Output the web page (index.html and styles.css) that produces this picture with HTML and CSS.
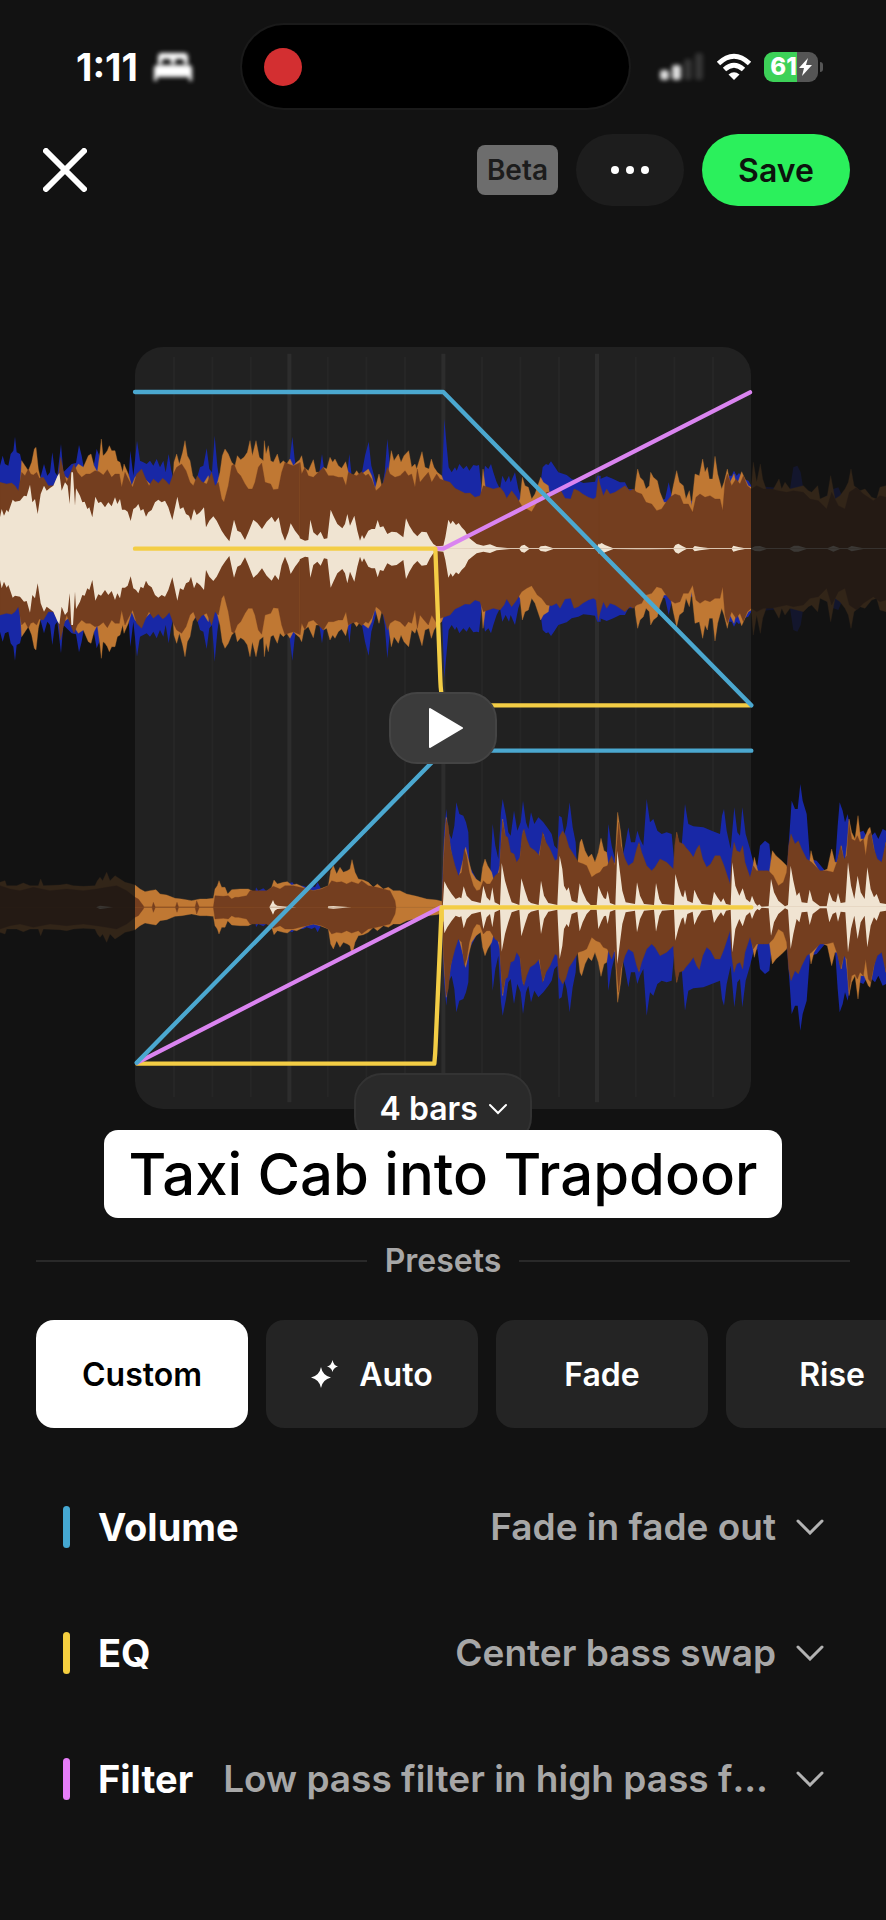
FILE: index.html
```html
<!DOCTYPE html>
<html lang="en">
<head>
    <meta charset="UTF-8">
    <meta name="viewport" content="width=device-width, initial-scale=1">
    <title>Edit transition</title>
    <link rel="stylesheet" href="styles.css">
</head>
<body>
<!-- Status bar -->
<div class="status-bar">
    <span class="status-time">1:11</span>
    <svg class="status-bed" width="42" height="32" viewBox="0 0 42 32">
        <path d="M6 13V6q0-4 4-4h22q4 0 4 4v7h-4V10q0-2-2-2h-5q-2 0-2 2v3h-4v-3q0-2-2-2h-5q-2 0-2 2v3zM2 30V18q0-4 4-4h30q4 0 4 4v12h-3v-4H5v4z"/>
    </svg>
    <div class="island"><span class="record-dot"></span></div>
    <svg class="status-signal" width="46" height="32" viewBox="0 0 46 32">
        <rect x="1" y="19" width="9" height="10" rx="3" opacity=".85"/>
        <rect x="13" y="14" width="9" height="15" rx="3" opacity=".85"/>
        <rect x="25" y="8" width="8" height="21" rx="3" opacity=".15"/>
        <rect x="36" y="2" width="8" height="27" rx="3" opacity=".15"/>
    </svg>
    <svg class="status-wifi" width="36" height="28" viewBox="0 0 36 28">
        <path d="M2.500 10.500Q18-4 33.500 10.500M8.500 16.500Q18 8 27.500 16.500" fill="none" stroke="#fff" stroke-width="5"/>
        <path d="M18 27l-5.500-5.500q5.500-4.500 11 0z" fill="#fff"/>
    </svg>
    <div class="battery">
        <span>61</span>
        <svg width="13" height="18" viewBox="0 0 13 18"><path d="M9 0L0 10h5l-2 8 10-11H7z" fill="#fff"/></svg>
    </div>
</div>

<!-- Header -->
<header class="header">
    <button type="button" class="close-button" aria-label="Close">
        <svg width="44" height="44" viewBox="0 0 44 44"><path d="M3 3l38 38M41 3L3 41"/></svg>
    </button>
    <span class="badge">Beta</span>
    <button type="button" class="more-button" aria-label="More options">
        <svg width="38" height="8" viewBox="0 0 38 8"><circle cx="4" cy="4" r="4"/><circle cx="19" cy="4" r="4"/><circle cx="34" cy="4" r="4"/></svg>
    </button>
    <button type="button" class="save-button">Save</button>
</header>

<main>
    <!-- Transition editor -->
    <section class="stage">
        <svg class="stage-canvas" viewBox="0 0 2658 2286">
            <rect x="405" y="0" width="1848" height="2286" rx="84" class="window"/>
            <path class="beat" d="M522 30V2250M637 30V2250M752 30V2250M983 30V2250M1099 30V2250M1215 30V2250M1446 30V2250M1561 30V2250M1677 30V2250M1907 30V2250M2023 30V2250M2139 30V2250"/>
            <path class="bar" d="M868 20V2266M1330 20V2266M1791 20V2266"/>

            <!-- Outgoing track, upper half mirrored below its axis -->
            <g transform="translate(0 -24)">
                <g id="track-a">
                    <path class="w-blue" d="M0 629V380L8 350 15 375 25 380 32 345 40 335 45 293 50 340 60 345 68 380 80 430 120 420 132 375 142 410 150 400 157 340 165 400 172 410 183 315 190 400 215 375 228 372 237 318 245 350 252 390 275 430 282 375 290 330 298 350 310 500 385 430 391 335 400 410 411 305 420 365 430 370 440 375 450 365 460 380 470 360 480 385 490 365 497 400 506 345 513 390 520 420 590 420 600 385 610 380 620 328 628 390 636 400 644 290 652 380 662 450 860 420 868 370 877 293 884 360 895 420 902 629Z"/>
                    <path class="w-orange" d="M50 629L55 530 65 365 75 380 85 395 95 370 103 330 108 325 115 390 122 420 140 500 178 500 184 375 192 410 205 420 225 390 235 375 250 385 265 350 273 345 282 380 292 400 300 340 304 300 309 350 315 345 322 335 328 320 335 335 345 335 352 365 360 370 368 400 372 375 385 405 395 440 405 415 420 400 435 420 515 500 522 370 530 345 538 375 548 340 555 305 562 350 570 365 578 410 590 430 600 450 625 410 635 500 660 400 667 350 675 330 685 345 695 370 705 380 712 350 722 362 732 355 742 340 750 305 757 350 768 305 778 355 790 365 793 305 798 345 805 320 812 365 820 370 832 345 840 375 850 365 860 375 870 360 880 380 890 370 902 360V629Z"/>
                    <path class="w-brown" d="M0 629V430L20 435 35 432 45 440 55 455 65 400 75 410 85 390 92 405 100 408 110 400 118 418 130 415 145 440 160 440 175 410 182 355 190 395 200 430 210 405 222 375 232 400 245 415 258 405 270 405 285 395 297 398 310 408 322 392 335 415 345 405 358 405 365 445 375 400 385 420 398 445 410 405 425 390 435 415 447 440 460 420 475 433 488 418 497 425 508 438 520 405 530 385 545 375 558 395 570 430 580 440 592 410 605 428 620 435 635 400 645 440 655 430 665 480 672 490 685 440 695 380 702 375 712 400 722 410 735 435 745 450 757 450 765 430 775 385 785 372 795 430 812 435 820 452 835 450 845 400 855 370 865 375 880 380 902 370V629Z"/>
                    <path class="w-cream" d="M0 632V535L5 510 12 530 20 512 25 520 38 482 45 488 60 485 72 470 80 472 90 437 97 490 105 480 113 525 122 465 132 440 140 455 150 447 160 440 172 412 178 402 185 455 195 430 203 440 209 495 214 400 219 400 225 500 228 448 240 470 247 490 254 488 262 510 268 505 277 535 286 473 295 492 303 488 315 505 325 490 335 502 345 475 352 495 360 480 366 512 375 512 383 518 392 546 400 510 408 505 415 495 422 515 430 510 438 533 445 520 455 513 465 490 475 482 485 490 495 485 505 505 517 543 532 473 540 510 550 505 558 525 567 530 573 545 582 510 590 528 600 520 612 505 618 565 628 545 640 532 650 545 665 575 675 590 688 607 702 542 712 575 722 580 735 603 745 580 760 542 772 552 786 570 800 548 815 533 825 550 836 535 845 580 855 605 865 580 872 553 885 575 902 597V632Z"/>
                    <g transform="translate(900 0)">
                        <path class="w-blue" d="M0 629L55 420 66 345 75 410 140 420 148 345 155 410 185 405 195 350 206 308 214 380 225 420 240 480 254 400 262 300 270 380 280 450 425 450 433 240 440 320 446 385 455 400 465 385 470 395 478 375 490 390 500 380 508 395 520 378 530 380 537 378 545 450 555 380 565 390 573 375 580 400 590 430 600 450 607 410 617 430 627 410 632 430 645 400 655 450 665 480 715 480 728 385 738 375 745 378 753 367 762 380 775 400 800 408 815 420 835 425 850 432 870 430 885 428 892 410 902 410V629Z"/>
                        <path class="w-orange" d="M0 629V360L5 350 12 385 25 395 40 362 48 400 60 400 70 385 80 390 90 355 98 370 105 360 115 380 125 388 137 368 145 400 160 410 170 395 180 410 192 400 205 390 215 410 225 450 237 405 245 440 262 420 274 335 282 365 295 345 303 370 312 350 326 335 335 385 345 375 350 390 366 338 375 385 387 390 394 360 402 385 412 400 425 410 432 430 445 520 540 520 549 390 558 460 640 520 660 480 667 415 675 440 685 445 695 480 705 465 722 415 730 430 745 440 760 530 902 530V629Z"/>
                        <path class="w-brown" d="M0 629V370L5 405 15 385 25 410 40 415 55 400 70 385 85 410 100 410 115 415 128 415 138 440 145 400 155 405 170 410 185 398 197 410 205 405 215 420 228 455 240 445 250 430 262 385 270 405 285 415 300 410 315 395 325 410 335 405 345 445 352 390 360 430 372 415 385 400 395 430 410 405 420 420 435 425 450 430 465 448 480 455 495 463 510 462 525 475 540 470 550 440 565 445 580 450 600 445 612 460 620 478 635 455 650 475 665 500 680 510 695 518 712 490 725 480 740 460 755 458 770 465 780 450 795 478 812 480 822 450 835 455 848 465 865 475 880 480 888 475 895 412 902 450V629Z"/>
                        <path class="w-cream" d="M-4 632V596L15 605 25 603 31 542 40 580 52 590 62 578 72 600 82 598 92 512 100 530 112 555 127 568 135 555 142 525 150 560 163 530 172 575 180 605 186 588 192 600 205 575 215 570 225 570 233 543 240 565 250 562 262 585 275 578 290 580 310 595 318 538 328 560 340 580 352 592 365 578 380 580 390 600 400 615 410 622 430 620 436 595 445 542 452 555 458 545 468 558 476 552 485 565 495 575 505 595 515 603 530 615 550 620 570 616 590 624 630 628 658 628 664 620 673 617 688 628 716 628 722 622 737 620 760 628 890 628 895 615 902 612V630Z"/>
                    </g>
                    <g transform="translate(1770 0)">
                        <path class="w-blue" d="M30 629V420L50 412 70 420 90 430 105 430 115 450 128 450 138 500 225 480 236 430 245 470 253 440 262 500 405 450 415 410 425 410 432 395 440 410 447 402 460 420 475 425 484 440 600 450 610 385 622 380 632 400 640 450 660 520 730 450 745 445 760 480 888 520V629Z"/>
                        <path class="w-orange" d="M31 629V480L60 470 100 520 130 490 137 430 143 390 150 415 160 425 168 450 178 440 182 400 190 415 202 425 210 460 222 490 240 490 250 440 260 395 268 430 280 440 288 480 298 455 305 500 315 405 328 410 338 360 345 400 352 385 358 420 368 420 375 352 383 405 395 450 402 430 412 390 420 430 432 405 440 440 455 398 465 420 475 440 484 445 490 370 500 430 511 375 518 420 530 455 545 460 567 420 575 450 585 430 600 450 640 440 655 455 665 460 683 440 690 480 712 470 722 410 735 480 750 470 765 450 775 430 783 390 792 440 810 455 825 450 845 475 860 480 870 445 888 440V629Z"/>
                        <path class="w-brown" d="M28 629V430L40 470 50 450 60 465 75 460 90 450 105 440 120 455 130 450 140 460 155 465 168 490 185 495 200 515 215 510 228 490 240 475 255 465 270 470 280 495 295 495 308 520 318 475 330 465 345 475 360 470 375 480 390 480 398 515 405 430 412 405 425 440 438 420 450 435 460 410 472 440 484 450 500 440 520 450 545 450 565 455 590 460 610 455 640 460 660 480 685 485 710 510 725 460 745 500 765 510 778 460 800 445 820 465 850 485 870 470 888 475V629Z"/>
                        <path class="w-cream" d="M22 630L25 618 35 612 45 618 70 628 140 627 180 627 250 628 256 618 265 614 278 622 290 628 308 628 314 621 330 624 360 628 425 628 430 620 445 624 465 628 484 628 495 622 510 621 530 628 598 628 612 620 625 620 650 628 712 628 730 620 750 628 772 628 785 621 820 628 888 628V630Z"/>
                    </g>
                </g>
                <use href="#track-a" transform="matrix(1 0 0 -1 0 1258)"/>
                <rect class="dim" x="2253" y="300" width="405" height="660"/>
            </g>

            <!-- Incoming track -->
            <g transform="translate(0 1056)">
                <g id="track-b">
                    <path class="w-blue" d="M760 625L768 565 775 575 790 568 798 575 860 555 877 550 885 560 910 560 920 565 935 560 945 565 953 550 962 568 975 625Z"/>
                    <path class="w-orange" d="M0 625V550L15 545 20 560 50 560 70 552 90 560 115 560 122 540 130 560 180 558 200 555 220 560 250 562 285 560 292 545 300 535 308 545 320 520 330 545 345 530 360 540 375 550 395 555 405 558 420 570 435 578 450 575 468 572 480 585 500 588 525 598 545 600 575 605 600 600 620 600 640 598 645 570 652 560 657 545 665 565 675 565 683 585 695 572 720 570 745 570 760 578 800 578 815 565 822 543 832 555 850 550 862 548 875 558 890 555 905 562 920 570 940 575 960 570 985 560 992 515 1000 500 1010 525 1020 505 1030 520 1042 515 1050 510 1056 482 1065 520 1075 540 1090 543 1105 550 1120 565 1132 555 1150 570 1165 565 1180 575 1200 575 1220 585 1250 592 1280 600 1310 603 1330 608V625Z"/>
                    <path class="w-brown" d="M0 625V560L30 570 60 575 100 565 150 575 200 570 250 575 290 570 320 565 350 560 380 575 405 595 415 600 430 620 432 625 456 625 460 610 466 625 526 625 531 610 536 625 585 625 590 605 598 625 640 625 645 590 670 592 685 590 695 600 705 595 715 595 740 590 750 575 775 575 800 575 820 562 840 570 855 560 880 560 900 565 920 570 940 575 965 570 985 560 995 545 1010 550 1025 548 1040 555 1055 548 1075 555 1085 545 1105 560 1130 565 1150 570 1170 575 1185 605 1188 625Z"/>
                    <path class="w-cream" d="M288 625L300 620 340 625ZM808 625L815 612 819 603 824 615 832 620 870 624 890 625ZM983 625L985 622 1000 621 1055 625Z"/>
                    <g transform="translate(1260 0)">
                        <path class="w-blue" d="M66 625V580L72 400 79 330 85 400 95 420 103 380 109 310 118 345 130 350 138 370 145 400 148 500 180 560 210 540 218 375 226 440 235 480 243 340 248 300 258 350 265 400 272 410 282 335 292 395 302 370 309 305 318 370 325 390 333 340 343 375 355 355 370 370 385 390 395 405 403 440 412 450 417 350 425 355 433 405 440 380 449 310 458 385 467 430 472 520 558 520 565 375 575 440 585 480 600 500 615 440 625 385 633 430 645 430 652 395 660 420 670 440 680 300 690 370 700 360 712 395 725 405 740 400 755 405 762 480 785 440 795 315 805 375 820 382 850 385 875 395 900 405 906 350 912 330 920 395 932 450 943 325 952 400 960 410 967 325 977 405 990 450 1000 490 1012 500 1020 440 1035 425 1048 435 1055 500 1100 520 1110 380 1115 305 1125 330 1133 330 1141 255 1148 305 1160 345 1170 480 1190 485 1215 515 1245 500 1253 380 1259 310 1268 335 1275 370 1283 345 1292 400 1305 430 1318 400 1330 395 1345 420 1365 400 1375 420 1388 390 1398 395V625Z"/>
                        <path class="w-orange" d="M66 625L72 450 79 355 90 440 110 560 130 480 137 445 145 480 155 520 168 540 182 550 188 505 195 480 203 500 215 520 225 560 240 500 248 360 258 430 280 560 300 480 310 395 325 480 350 500 370 405 385 470 410 560 428 400 445 480 472 500 480 430 485 420 495 455 505 475 515 465 525 490 535 460 543 418 552 455 560 460 568 520 585 490 593 340 602 400 612 500 620 560 640 520 657 435 675 560 760 560 770 400 785 480 830 560 990 560 1003 475 1012 510 1030 560 1048 520 1057 455 1068 470 1085 485 1100 500 1115 560 1165 520 1173 455 1182 490 1200 520 1222 510 1235 450 1245 490 1252 490 1264 440 1274 500 1282 430 1287 360 1295 400 1305 420 1314 350 1322 420 1332 420 1345 390 1350 385 1360 440 1380 560 1398 430V625Z"/>
                        <path class="w-brown" d="M66 625L70 500 78 360 85 380 92 450 105 500 115 530 125 520 133 450 140 470 148 520 160 560 170 575 180 572 190 545 200 555 210 555 225 530 238 520 242 450 248 365 256 410 263 415 272 460 282 465 290 490 300 475 306 410 312 390 320 420 330 445 345 455 358 470 368 400 378 430 390 450 405 485 412 480 417 415 428 395 437 410 447 445 460 465 475 490 490 495 500 500 515 535 528 525 540 520 550 505 562 500 575 470 585 500 590 440 596 370 603 440 615 480 625 500 640 490 650 450 657 430 665 460 680 500 695 515 705 505 720 480 740 490 760 510 764 440 770 400 778 430 790 435 797 445 810 460 820 475 830 450 838 438 848 480 860 505 872 495 885 470 900 470 912 500 930 555 935 480 942 430 950 455 960 460 968 440 975 490 990 535 1000 500 1010 515 1030 515 1045 515 1060 530 1075 560 1090 550 1100 520 1106 440 1113 405 1125 435 1135 425 1145 450 1160 480 1175 490 1200 515 1220 515 1240 520 1252 485 1262 440 1272 480 1280 470 1287 370 1295 420 1305 425 1312 410 1320 430 1330 420 1337 470 1345 410 1352 400 1362 450 1372 480 1385 490 1398 430V625Z"/>
                        <path class="w-cream" d="M68 627L73 547 82 565 95 585 107 600 118 595 124 598 131 562 140 590 155 605 182 612 190 560 200 595 210 605 217 565 224 610 240 618 245 492 255 545 265 580 275 610 298 618 304 538 315 575 325 605 333 612 356 618 363 545 372 590 385 612 412 618 419 470 427 510 432 560 440 575 446 565 455 605 472 612 479 553 488 580 500 605 512 618 530 618 535 560 545 585 552 598 558 600 563 575 570 612 586 618 592 455 600 520 607 575 617 610 645 615 651 550 660 590 672 615 702 618 708 552 718 600 726 615 762 618 766 525 775 560 785 590 790 595 795 572 802 605 818 612 823 572 833 595 845 615 875 618 882 578 892 595 903 610 910 598 918 615 932 618 937 490 946 560 958 590 968 568 978 600 990 610 996 590 1005 612 1012 620 1018 616 1025 624 1046 622 1053 540 1062 580 1075 605 1095 622 1104 618 1112 500 1120 545 1130 590 1138 580 1145 610 1162 612 1169 572 1178 605 1200 622 1220 622 1228 580 1238 605 1248 610 1254 582 1262 612 1276 610 1284 490 1293 560 1303 600 1313 530 1322 580 1334 600 1342 505 1352 570 1362 595 1370 585 1380 612 1398 615V627Z"/>
                    </g>
                </g>
                <use href="#track-b" transform="matrix(1 0 0 -1 0 1250)"/>
                <rect class="dim" x="0" y="460" width="405" height="330"/>
            </g>

            <!-- Automation curves -->
            <g class="curves">
                <path class="filter" d="M1305 605H1330L2250 136"/>
                <path class="eq" d="M405 605H1306L1321 1000Q1324 1075 1340 1075H2250"/>
                <path class="volume" d="M405 135H1330L2254 1075"/>
                <path class="eq" d="M412 2150H1303Q1306 2120 1307 2090L1325 1681"/>
                <path class="filter" d="M412 2147L1322 1681"/>
                <path class="eq" d="M1325 1720V1681H2254"/>
                <path class="volume" d="M410 2147L1330 1211H2254"/>
            </g>
        </svg>

        <button type="button" class="play-button" aria-label="Play">
            <svg width="34" height="40" viewBox="0 0 34 40"><path d="M1 1L33 20 1 39z"/></svg>
        </button>

        <label class="length-picker">
            <select aria-label="Transition length">
                <option>4 bars</option>
                <option>8 bars</option>
            </select>
            <svg width="18" height="12" viewBox="0 0 18 12"><path d="M1 2l8 8 8-8"/></svg>
        </label>
    </section>

    <p class="caption">Taxi Cab into Trapdoor</p>

    <!-- Presets -->
    <h2 class="presets-title">Presets</h2>
    <div class="presets">
        <button type="button" class="preset active">Custom</button>
        <button type="button" class="preset">
            <svg width="28" height="28" viewBox="0 0 28 28"><path d="M10 7Q11.500 15.500 20 17.500 11.500 19.500 10 28 8.500 19.500 0 17.500 8.500 15.500 10 7zM21.500 0Q22.500 5.500 27 6.500 22.500 7.500 21.500 12 20.500 7.500 16 6.500 20.500 5.500 21.500 0z"/></svg>
            Auto
        </button>
        <button type="button" class="preset">Fade</button>
        <button type="button" class="preset">Rise</button>
    </div>

    <!-- Curve settings -->
    <div class="settings">
        <div class="setting">
            <span class="marker volume"></span>
            <label for="volume">Volume</label>
            <select id="volume">
                <option>Fade in fade out</option>
            </select>
            <svg class="chevron" width="28" height="16" viewBox="0 0 28 16"><path d="M2 2l12 12L26 2"/></svg>
        </div>
        <div class="setting">
            <span class="marker eq"></span>
            <label for="eq">EQ</label>
            <select id="eq">
                <option>Center bass swap</option>
            </select>
            <svg class="chevron" width="28" height="16" viewBox="0 0 28 16"><path d="M2 2l12 12L26 2"/></svg>
        </div>
        <div class="setting">
            <span class="marker filter"></span>
            <label for="filter">Filter</label>
            <select id="filter">
                <option>Low pass filter in high pass filter out</option>
            </select>
            <svg class="chevron" width="28" height="16" viewBox="0 0 28 16"><path d="M2 2l12 12L26 2"/></svg>
        </div>
    </div>
</main>
</body>
</html>
```

FILE: styles.css
```css
* {
    box-sizing: border-box;
}
body {
    margin: 0;
    background-color: #121212;
    color: #ffffff;
    font-family: Inter, "Liberation Sans", sans-serif;
    font-weight: 600;
    overflow-x: hidden;
}
button,
select {
    margin: 0;
    padding: 0;
    border: none;
    background: none;
    color: inherit;
    font: inherit;
    cursor: pointer;
}
select {
    appearance: none;
}
svg {
    display: block;
    flex: none;
}

/* Status bar */
.status-bar {
    display: flex;
    align-items: center;
    padding: 25px 68px 0 76px;
}
.status-time {
    font-size: 38px;
    font-weight: 700;
    line-height: 40px;
}
.status-bed {
    margin-left: 14px;
    fill: #ffffff;
    filter: blur(2px);
}
.island {
    flex: 1;
    display: flex;
    align-items: center;
    height: 83px;
    margin: 0 30px 0 48px;
    padding-left: 22px;
    border-radius: 42px;
    background-color: #000000;
    box-shadow: 0 0 0 2px #1a1a1a;
}
.record-dot {
    width: 38px;
    height: 38px;
    border-radius: 50%;
    background-color: #d32f31;
}
.status-signal {
    fill: #ffffff;
    filter: blur(2px);
}
.status-wifi {
    margin: 0 12px 0 11px;
}
.battery {
    position: relative;
    display: flex;
    align-items: center;
    justify-content: center;
    gap: 2px;
    width: 54px;
    height: 30px;
    border-radius: 9px;
    background: linear-gradient(to right, #3dd158 62%, #555555 62%);
    font-size: 24px;
    font-weight: 800;
    line-height: 30px;
}
.battery::after {
    content: "";
    position: absolute;
    left: 100%;
    margin-left: 2px;
    width: 3px;
    height: 10px;
    border-radius: 0 3px 3px 0;
    background-color: #555555;
}

/* Header */
.header {
    display: flex;
    align-items: center;
    gap: 18px;
    margin-top: 26px;
    padding: 0 36px;
}
.close-button {
    display: flex;
    justify-content: center;
    width: 58px;
    margin-right: auto;
}
.close-button path {
    fill: none;
    stroke: #ffffff;
    stroke-width: 6;
    stroke-linecap: round;
}
.badge {
    padding: 0 10px;
    border-radius: 8px;
    background-color: #6d6d6d;
    color: #1c1c1c;
    font-size: 28px;
    line-height: 50px;
}
.more-button {
    display: flex;
    align-items: center;
    justify-content: center;
    width: 108px;
    height: 72px;
    border-radius: 36px;
    background-color: #1d1d1d;
    fill: #ffffff;
}
.save-button {
    width: 148px;
    height: 72px;
    border-radius: 36px;
    background-color: #2bf05c;
    color: #0c130d;
    font-size: 32px;
}

/* Transition editor */
.stage {
    position: relative;
    margin-top: 141px;
}
.stage-canvas {
    width: 100%;
    height: auto;
}
.window {
    fill: #212121;
}
.beat,
.bar {
    stroke: #262626;
    stroke-width: 6;
}
.bar {
    stroke: #2d2d2d;
    stroke-width: 12;
}
.w-blue {
    fill: #1828a6;
}
.w-orange {
    fill: #c07833;
    stroke: #c07833;
}
.w-brown {
    fill: #743e1f;
    stroke: #743e1f;
}
.w-cream {
    fill: #f0e4d2;
}
.dim {
    fill: #121212;
    opacity: 0.82;
}
.curves path {
    fill: none;
    stroke-width: 13;
    stroke-linecap: round;
    stroke-linejoin: round;
}
.curves .volume {
    stroke: #4ba8d0;
}
.curves .eq {
    stroke: #f3cd45;
}
.curves .filter {
    stroke: #da84f0;
}
.play-button,
.length-picker {
    position: absolute;
    left: 50%;
    transform: translateX(-50%);
    display: flex;
    align-items: center;
    justify-content: center;
    height: 72px;
    border: 2px solid #444444;
    border-radius: 28px;
    background-color: #3b3b3b;
}
.play-button {
    top: 345px;
    width: 108px;
    padding-left: 6px;
}
.play-button path {
    fill: #ffffff;
    stroke: #ffffff;
    stroke-width: 2;
    stroke-linejoin: round;
}
.length-picker {
    bottom: -36px;
    gap: 10px;
    width: 178px;
    border-color: #333333;
    background-color: #2a2a2a;
    font-size: 32px;
    line-height: 40px;
}
.length-picker path,
.chevron path {
    fill: none;
    stroke: #ffffff;
    stroke-width: 2;
    stroke-linecap: round;
}

/* Caption */
.caption {
    position: relative;
    width: fit-content;
    margin: 21px auto 0;
    padding: 0 25px;
    border-radius: 14px;
    background-color: #ffffff;
    color: #000000;
    font-size: 58px;
    font-weight: 500;
    line-height: 88px;
}

/* Presets */
.presets-title {
    display: flex;
    align-items: center;
    gap: 18px;
    margin: 23px 36px 0;
    color: #a7a7a7;
    font-size: 32px;
    font-weight: 600;
    line-height: 40px;
}
.presets-title::before,
.presets-title::after {
    content: "";
    flex: 1;
    height: 2px;
    background-color: #292929;
}
.presets {
    display: flex;
    gap: 18px;
    margin-top: 39px;
    padding: 0 36px;
    overflow: hidden;
}
.preset {
    flex: none;
    display: flex;
    align-items: center;
    justify-content: center;
    gap: 20px;
    width: 212px;
    height: 108px;
    border-radius: 18px;
    background-color: #242424;
    fill: #ffffff;
    font-size: 32px;
}
.preset.active {
    background-color: #ffffff;
    color: #000000;
}

/* Curve settings */
.settings {
    margin-top: 36px;
    padding: 0 62px 0 63px;
}
.setting {
    display: flex;
    align-items: center;
    height: 126px;
    font-size: 38px;
    line-height: 52px;
}
.setting label {
    font-weight: 700;
}
.marker {
    width: 7px;
    height: 42px;
    margin-right: 28px;
    border-radius: 4px;
}
.marker.volume {
    background-color: #45a8d2;
}
.marker.eq {
    background-color: #f5cf3f;
}
.marker.filter {
    background-color: #e67df8;
}
.setting select {
    flex: 1;
    min-width: 0;
    margin: 0 20px 0 30px;
    color: #a7a7a7;
    font-size: 37px;
    text-align: right;
    text-align-last: right;
    text-overflow: ellipsis;
    overflow: hidden;
    white-space: nowrap;
}
.chevron path {
    stroke: #b3b3b3;
    stroke-width: 3;
}
```
